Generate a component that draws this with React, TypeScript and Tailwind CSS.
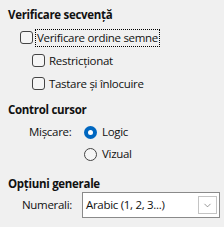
import { ChevronDown } from 'lucide-react';

function Check({ label, focus }: { label: string; focus?: boolean }) {
  return (
    <div className="flex items-center h-[23px]">
      <span className="inline-block w-[13px] h-[13px] rounded-[3px] border border-[#444] bg-[#f5f5f5]" />
      <span className={`ml-[3px] px-[1px] h-[16px] leading-[16px] ${focus ? 'outline outline-1 outline-dotted outline-black' : ''}`}>{label}</span>
    </div>
  );
}

function Radio({ label, on }: { label: string; on?: boolean }) {
  return (
    <div className="flex items-center h-[22px]">
      {on ? (
        <span className="inline-flex w-[13px] h-[13px] rounded-full bg-[#0067c0] items-center justify-center">
          <span className="w-[5px] h-[5px] rounded-full bg-white" />
        </span>
      ) : (
        <span className="inline-block w-[13px] h-[13px] rounded-full border border-[#444] bg-[#f5f5f5]" />
      )}
      <span className="ml-[5px]">{label}</span>
    </div>
  );
}

export default function App() {
  return (
    <div className="w-[224px] h-[227px] bg-[#f0f0f0] text-[11.5px] leading-[16px] text-[#111] font-['Open_Sans',sans-serif] tracking-[-0.3px] overflow-hidden">
      <div className="pl-[8px] pt-[7px] h-[23px] font-bold">Verificare secvență</div>
      <div className="pl-[20px] pt-[3px]">
        <Check label="Verificare ordine semne" focus />
        <div className="pl-[12px]">
          <Check label="Restricționat" />
          <Check label="Tastare și înlocuire" />
        </div>
      </div>
      <div className="pl-[8px] pt-[7px] h-[23px] font-bold">Control cursor</div>
      <div className="flex pl-[29px] pt-[3px]">
        <div className="w-[55px] h-[22px] flex items-center">Mișcare:</div>
        <div>
          <Radio label="Logic" on />
          <Radio label="Vizual" />
        </div>
      </div>
      <div className="pl-[8px] pt-[11px] h-[27px] font-bold">Opțiuni generale</div>
      <div className="flex items-center pl-[22px]">
        <div className="w-[60px]">Numerali:</div>
        <div className="flex h-[26px] w-[138px] border border-[#8a8a8a] bg-white">
          <div className="flex-1 flex items-center pl-[3px]">Arabic (1, 2, 3...)</div>
          <div className="w-[19px] my-[3px] mr-[2px] border border-[#c4c4c4] flex items-center justify-center">
            <ChevronDown size={11} strokeWidth={1.3} color="#555" />
          </div>
        </div>
      </div>
    </div>
  );
}
